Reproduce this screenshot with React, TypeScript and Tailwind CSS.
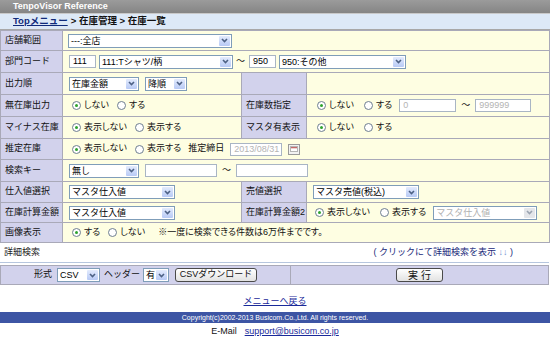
import React from 'react';

const font = "font-['Liberation_Sans','Noto_Sans_CJK_JP',sans-serif]";

function Chevron({ disabled }: { disabled?: boolean }) {
  return (
    <svg width="7" height="5" viewBox="0 0 7 5">
      <path d="M1 1 L3.5 3.5 L6 1" fill="none" stroke={disabled ? '#9aa3b0' : '#4d6185'} strokeWidth="1.6" />
    </svg>
  );
}

function Select({ className, text, disabled }: { className: string; text: string; disabled?: boolean }) {
  return (
    <div className={`flex h-[14px] shrink-0 items-stretch border border-[#7f9db9] bg-white ${className}`}>
      <span className={`flex-1 overflow-hidden whitespace-nowrap pl-[2px] text-[9px] leading-[12px] ${disabled ? 'text-[#b0b0b0]' : 'text-black'}`}>
        {text}
      </span>
      <span
        className={`m-px flex w-[11px] items-center justify-center rounded-[1px] ${
          disabled ? 'bg-[#e4e6ea]' : 'bg-gradient-to-b from-[#e3ebfd] to-[#b8caf5]'
        }`}
      >
        <Chevron disabled={disabled} />
      </span>
    </div>
  );
}

function Input({ className, text, disabled }: { className: string; text?: string; disabled?: boolean }) {
  return (
    <div
      className={`h-[13px] shrink-0 overflow-hidden border border-[#a9b5c4] bg-white pl-[3px] text-[9px] leading-[11px] whitespace-nowrap ${
        disabled ? 'text-[#b4b4b4]' : 'text-black'
      } ${className}`}
    >
      {text}
    </div>
  );
}

function Radio({ checked }: { checked?: boolean }) {
  return (
    <span className="inline-flex h-[9px] w-[9px] shrink-0 items-center justify-center rounded-full border border-[#6f7f90] bg-white">
      {checked && <span className="h-[3px] w-[3px] rounded-full bg-[#2ea32e]" />}
    </span>
  );
}

function RadioGroup({ items, checked = 0, gap = 'mr-[8px]' }: { items: string[]; checked?: number; gap?: string }) {
  return (
    <div className="flex items-center whitespace-nowrap">
      {items.map((item, i) => (
        <div key={item} className={`flex items-center ${i < items.length - 1 ? gap : ''}`}>
          <Radio checked={i === checked} />
          <span className="ml-[3px] text-[9px] [font-feature-settings:'palt']">{item}</span>
        </div>
      ))}
    </div>
  );
}

function Label({ children }: { children?: React.ReactNode }) {
  return (
    <td className="overflow-hidden border border-[#a9a9b8] bg-[#d2d2ec] pl-[4px] align-middle text-[9px] whitespace-nowrap text-[#111]">
      {children}
    </td>
  );
}

function Cell({ children, colSpan, pad = 'pl-[6px]' }: { children?: React.ReactNode; colSpan?: number; pad?: string }) {
  return (
    <td colSpan={colSpan} className={`border border-[#a9a9b8] bg-[#fefee2] align-middle ${pad}`}>
      <div className="flex items-center whitespace-nowrap">{children}</div>
    </td>
  );
}

function Calendar() {
  return (
    <svg width="12" height="11" viewBox="0 0 12 11" className="ml-[6px]">
      <rect x="0.5" y="0.5" width="11" height="10" fill="#f2f2f2" stroke="#9a9a9a" />
      <rect x="2.5" y="2.5" width="7" height="5" fill="#fff" stroke="#b5b5b5" />
      <rect x="3" y="3" width="6" height="1.3" fill="#c46a6a" />
    </svg>
  );
}

function Button({ className, children }: { className: string; children: React.ReactNode }) {
  return (
    <div
      className={`flex h-[14px] items-center justify-center rounded-[3px] border border-[#4a4a4a] bg-gradient-to-b from-white to-[#e2e2e2] whitespace-nowrap ${className}`}
    >
      {children}
    </div>
  );
}

export default function App() {
  return (
    <div className={`h-[348px] w-[550px] overflow-hidden bg-white text-[#111] ${font}`}>
      {/* Title */}
      <div className="h-[14px] border-b border-[#c9c9c9] bg-gradient-to-b from-[#9b9b9b] to-[#858585] pl-[13px] text-[9px] leading-[13px] font-bold text-white">
        TenpoVisor Reference
      </div>

      {/* Breadcrumb */}
      <div className="flex h-[16px] items-center border-b border-[#a8a8a8] bg-[#dde9f7] pl-[13px] text-[9.5px] font-bold whitespace-nowrap">
        <span className="text-[#102a7a] underline">Topメニュー</span>
        <span className="ml-[3px]">&gt; 在庫管理 &gt; 在庫一覧</span>
      </div>

      {/* Form */}
      <table className="w-[549px] table-fixed border-collapse">
        <colgroup>
          <col className="w-[62px]" />
          <col className="w-[179px]" />
          <col className="w-[65px]" />
          <col className="w-[243px]" />
        </colgroup>
        <tbody>
          <tr className="h-[20px]">
            <Label>店舗範囲</Label>
            <Cell colSpan={3} pad="pl-[5px]">
              <Select className="w-[164px]" text="---:全店" />
            </Cell>
          </tr>
          <tr className="h-[22px]">
            <Label>部門コード</Label>
            <Cell colSpan={3}>
              <Input className="w-[27px]" text="111" />
              <Select className="ml-[3px] w-[134px]" text="111:Tシャツ/柄" />
              <span className="mx-[3px] text-[9px]">～</span>
              <Input className="ml-[1px] w-[27px]" text="950" />
              <Select className="ml-[3px] w-[127px]" text="950:その他" />
            </Cell>
          </tr>
          <tr className="h-[22px]">
            <Label>出力順</Label>
            <Cell>
              <Select className="w-[70px]" text="在庫金額" />
              <Select className="ml-[6px] w-[42px]" text="降順" />
            </Cell>
            <Label />
            <Cell />
          </tr>
          <tr className="h-[22px]">
            <Label>無在庫出力</Label>
            <Cell pad="pl-[9px]">
              <RadioGroup items={['しない', 'する']} />
            </Cell>
            <Label>在庫数指定</Label>
            <Cell pad="pl-[10px]">
              <RadioGroup items={['しない', 'する']} gap="mr-[10px]" />
              <Input className="ml-[7px] w-[57px]" text="0" disabled />
              <span className="mx-[5px] text-[9px]">～</span>
              <Input className="w-[56px]" text="999999" disabled />
            </Cell>
          </tr>
          <tr className="h-[22px]">
            <Label>マイナス在庫</Label>
            <Cell pad="pl-[9px]">
              <RadioGroup items={['表示しない', '表示する']} />
            </Cell>
            <Label>マスタ有表示</Label>
            <Cell pad="pl-[10px]">
              <RadioGroup items={['しない', 'する']} gap="mr-[10px]" />
            </Cell>
          </tr>
          <tr className="h-[21px]">
            <Label>推定在庫</Label>
            <Cell colSpan={3} pad="pl-[9px]">
              <RadioGroup items={['表示しない', '表示する']} />
              <span className="ml-[7px] text-[9px]">推定締日</span>
              <Input className="ml-[6px] w-[52px]" text="2013/08/31" disabled />
              <Calendar />
            </Cell>
          </tr>
          <tr className="h-[22px]">
            <Label>検索キー</Label>
            <Cell colSpan={3}>
              <Select className="w-[70px]" text="無し" />
              <Input className="ml-[6px] w-[72px]" />
              <span className="mx-[5px] text-[9px]">～</span>
              <Input className="w-[72px]" />
            </Cell>
          </tr>
          <tr className="h-[21px]">
            <Label>仕入値選択</Label>
            <Cell>
              <Select className="w-[106px]" text="マスタ仕入値" />
            </Cell>
            <Label>売値選択</Label>
            <Cell pad="pl-[6px]">
              <Select className="w-[106px]" text="マスタ売値(税込)" />
            </Cell>
          </tr>
          <tr className="h-[20px]">
            <Label>在庫計算金額</Label>
            <Cell>
              <Select className="w-[106px]" text="マスタ仕入値" />
            </Cell>
            <Label>在庫計算金額2</Label>
            <Cell pad="pl-[8px]">
              <RadioGroup items={['表示しない', '表示する']} gap="mr-[10px]" />
              <Select className="ml-[7px] w-[104px]" text="マスタ仕入値" disabled />
            </Cell>
          </tr>
          <tr className="h-[20px]">
            <Label>画像表示</Label>
            <Cell colSpan={3} pad="pl-[9px]">
              <RadioGroup items={['する', 'しない']} />
              <span className="ml-[13px] text-[9px] [font-feature-settings:'palt']">※一度に検索できる件数は6万件までです。</span>
            </Cell>
          </tr>
        </tbody>
      </table>

      {/* Detail search */}
      <div className="flex h-[20px] w-[549px] items-center justify-between border-b border-[#b6c6de] bg-white pr-[36px] pl-[4px] text-[9px] whitespace-nowrap">
        <span className="text-[#222]">詳細検索</span>
        <span className="text-[#1a2a7a]">
          ( クリックにて詳細検索を表示 <span className="text-[#6f8fd0]">↓↓</span> )
        </span>
      </div>

      {/* Output controls */}
      <div className="mt-[2px] flex h-[20px] w-[549px] border border-[#a9a9b8] bg-[#d2d2ec]">
        <div className="flex w-[290px] items-center justify-center border-r border-[#a9a9b8] text-[9px] whitespace-nowrap">
          <span>形式</span>
          <Select className="ml-[5px] w-[43px]" text="CSV" />
          <span className="ml-[4px]">ヘッダー</span>
          <Select className="ml-[3px] w-[26px]" text="有" />
          <Button className="ml-[6px] w-[82px] text-[9px]">CSVダウンロード</Button>
        </div>
        <div className="flex flex-1 items-center justify-center">
          <Button className="w-[47px] pl-[3px] text-[10px] tracking-[3px]">実行</Button>
        </div>
      </div>

      {/* Back link */}
      <div className="mt-[10px] text-center text-[9px] leading-[12px] text-[#1a2a9a] underline">メニューへ戻る</div>

      {/* Footer */}
      <div className="mt-[5px] h-[11px] bg-[#3d55a4] text-center text-[7px] leading-[11px] text-white">
        Copyright(c)2002-2013 Busicom.Co.,Ltd. All rights reserved.
      </div>
      <div className="mt-[3px] flex justify-center text-[9px] leading-[11px]">
        <span>E-Mail</span>
        <span className="ml-[8px] text-[#1a2a9a] underline">support@busicom.co.jp</span>
      </div>
    </div>
  );
}
